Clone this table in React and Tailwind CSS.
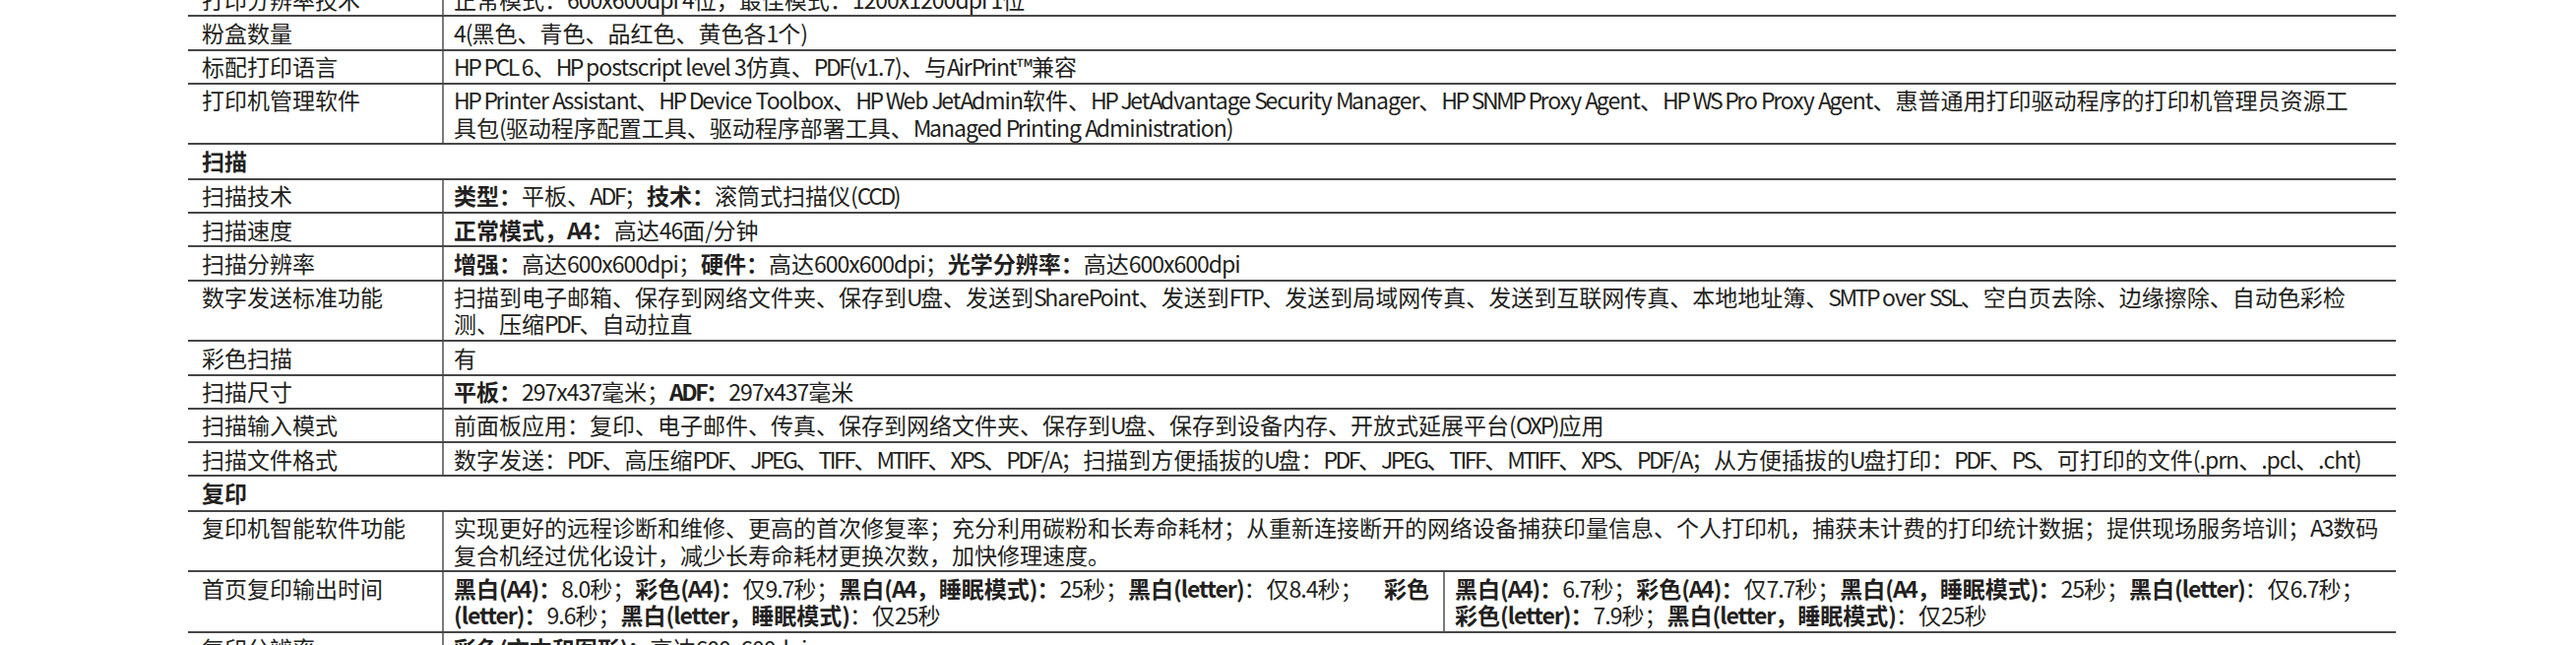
import { Children } from 'react';

// the reference uses a condensed latin face; tighten latin runs (capitals more) to match
const fmt = (str) =>
  str.split(/([A-Za-z0-9 .,()\/™\-]+)/).map((part, i) =>
    i % 2 ? (
      <span key={i} className="tracking-[-1px]">
        {part.split(/([A-Z]+)/).map((p, j) =>
          j % 2 ? (
            <span key={j} className="tracking-[-2.5px]">{p}</span>
          ) : (
            p
          )
        )}
      </span>
    ) : (
      part
    )
  );

const wrap = (children) =>
  Children.map(children, (c) => (typeof c === 'string' ? fmt(c) : c));

const B = ({ children }) => <b className="font-bold">{wrap(children)}</b>;

function Row({ label, children, split }) {
  return (
    <div className="flex border-b-2 border-[#474747]">
      <div className="w-[260px] shrink-0 border-r-2 border-[#7a7a7a] pl-[14px] py-[2.5px]">
        {label}
      </div>
      {split ? (
        <div className="flex flex-1">
          <div className="w-[1017px] shrink-0 border-r-2 border-[#7a7a7a] pl-[10px] py-[2.5px]">
            {split[0]}
          </div>
          <div className="flex-1 pl-[10px] py-[2.5px]">{split[1]}</div>
        </div>
      ) : (
        <div className="flex-1 pl-[10px] py-[2.5px] whitespace-nowrap">{wrap(children)}</div>
      )}
    </div>
  );
}

function Section({ title }) {
  return (
    <div className="border-b-2 border-[#474747] pl-[14px] py-[3px] font-bold">
      {title}
    </div>
  );
}

export default function App() {
  return (
    <div className="min-h-screen bg-white overflow-hidden">
      <div className="ml-[191px] w-[2243px] -mt-[17px] text-[23px] leading-[27.3px] text-[#231f20] font-['Noto_Sans_CJK_SC',sans-serif]">
        <Row label="打印分辨率技术">正常模式：600x600dpi 4位，最佳模式：1200x1200dpi 1位</Row>
        <Row label="粉盒数量">4(黑色、青色、品红色、黄色各1个)</Row>
        <Row label="标配打印语言">HP PCL 6、HP postscript level 3仿真、PDF(v1.7)、与AirPrint™兼容</Row>
        <Row label="打印机管理软件">
          HP Printer Assistant、HP Device Toolbox、HP Web JetAdmin软件、HP JetAdvantage Security Manager、HP SNMP Proxy Agent、HP WS Pro Proxy Agent、惠普通用打印驱动程序的打印机管理员资源工
          <br />
          具包(驱动程序配置工具、驱动程序部署工具、Managed Printing Administration)
        </Row>

        <Section title="扫描" />
        <Row label="扫描技术">
          <B>类型：</B>平板、ADF；<B>技术：</B>滚筒式扫描仪(CCD)
        </Row>
        <Row label="扫描速度">
          <B>正常模式，A4：</B>高达46面/分钟
        </Row>
        <Row label="扫描分辨率">
          <B>增强：</B>高达600x600dpi；<B>硬件：</B>高达600x600dpi；<B>光学分辨率：</B>高达600x600dpi
        </Row>
        <Row label="数字发送标准功能">
          扫描到电子邮箱、保存到网络文件夹、保存到U盘、发送到SharePoint、发送到FTP、发送到局域网传真、发送到互联网传真、本地地址簿、SMTP over SSL、空白页去除、边缘擦除、自动色彩检
          <br />
          测、压缩PDF、自动拉直
        </Row>
        <Row label="彩色扫描">有</Row>
        <Row label="扫描尺寸">
          <B>平板：</B>297x437毫米；<B>ADF：</B>297x437毫米
        </Row>
        <Row label="扫描输入模式">
          前面板应用：复印、电子邮件、传真、保存到网络文件夹、保存到U盘、保存到设备内存、开放式延展平台(OXP)应用
        </Row>
        <Row label="扫描文件格式">
          数字发送：PDF、高压缩PDF、JPEG、TIFF、MTIFF、XPS、PDF/A；扫描到方便插拔的U盘：PDF、JPEG、TIFF、MTIFF、XPS、PDF/A；从方便插拔的U盘打印：PDF、PS、可打印的文件(.prn、.pcl、.cht)
        </Row>

        <Section title="复印" />
        <Row label="复印机智能软件功能">
          实现更好的远程诊断和维修、更高的首次修复率；充分利用碳粉和长寿命耗材；从重新连接断开的网络设备捕获印量信息、个人打印机，捕获未计费的打印统计数据；提供现场服务培训；A3数码
          <br />
          复合机经过优化设计，减少长寿命耗材更换次数，加快修理速度。
        </Row>
        <Row
          label="首页复印输出时间"
          split={[
            <div key="a" className="whitespace-nowrap">
              <div className="flex justify-between pr-[14px]">
                <span>
                  <B>黑白(A4)：</B>{fmt('8.0')}秒；<B>彩色(A4)：</B>仅{fmt('9.7')}秒；<B>黑白(A4，睡眠模式)：</B>{fmt('25')}秒；<B>黑白(letter)</B>：仅{fmt('8.4')}秒；
                </span>
                <B>彩色</B>
              </div>
              <div>
                <B>(letter)：</B>{fmt('9.6')}秒；<B>黑白(letter，睡眠模式)</B>：仅{fmt('25')}秒
              </div>
            </div>,
            <div key="b" className="whitespace-nowrap">
              <B>黑白(A4)：</B>{fmt('6.7')}秒；<B>彩色(A4)：</B>仅{fmt('7.7')}秒；<B>黑白(A4，睡眠模式)：</B>{fmt('25')}秒；<B>黑白(letter)</B>：仅{fmt('6.7')}秒；
              <br />
              <B>彩色(letter)：</B>{fmt('7.9')}秒；<B>黑白(letter，睡眠模式)</B>：仅{fmt('25')}秒
            </div>,
          ]}
        />
        <Row label="复印分辨率">
          <B>彩色(文本和图形)：</B>高达600x600dpi
        </Row>
      </div>
    </div>
  );
}
